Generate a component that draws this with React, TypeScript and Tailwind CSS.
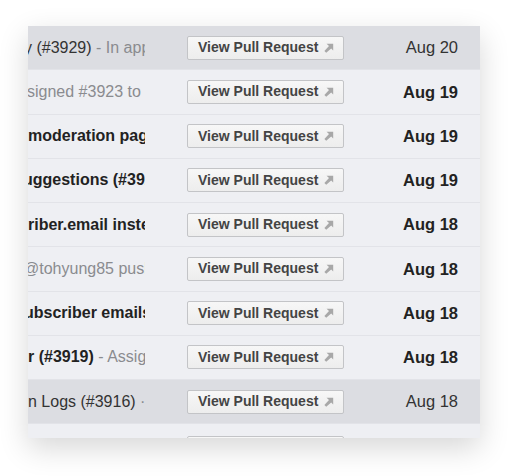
import type { FC } from 'react';

type Row = {
  id: number;
  shift: string;
  parts: { text: string; tone: 'bold' | 'dark' | 'muted' }[];
  date: string;
  read: boolean;
  dateBold: boolean;
};

const rows: Row[] = [
  { id: 1, shift: '-ml-[4px]', parts: [{ text: 'y (#3929)', tone: 'dark' }, { text: ' - In approval', tone: 'muted' }], date: 'Aug 20', read: true, dateBold: false },
  { id: 2, shift: '-ml-[1px]', parts: [{ text: 'signed #3923 to @tohyung85', tone: 'muted' }], date: 'Aug 19', read: false, dateBold: true },
  { id: 3, shift: 'ml-0', parts: [{ text: 'moderation page (#3925)', tone: 'bold' }], date: 'Aug 19', read: false, dateBold: true },
  { id: 4, shift: '-ml-[5px]', parts: [{ text: 'uggestions (#3924)', tone: 'bold' }], date: 'Aug 19', read: false, dateBold: true },
  { id: 5, shift: 'ml-0', parts: [{ text: 'riber.email instead', tone: 'bold' }], date: 'Aug 18', read: false, dateBold: true },
  { id: 6, shift: '-ml-[5px]', parts: [{ text: '@tohyung85 pushed', tone: 'muted' }], date: 'Aug 18', read: false, dateBold: true },
  { id: 7, shift: '-ml-[4px]', parts: [{ text: 'ubscriber emails', tone: 'bold' }], date: 'Aug 18', read: false, dateBold: true },
  { id: 8, shift: 'ml-0', parts: [{ text: 'r (#3919)', tone: 'bold' }, { text: ' - Assigned', tone: 'muted' }], date: 'Aug 18', read: false, dateBold: true },
  { id: 9, shift: 'ml-0', parts: [{ text: 'n Logs (#3916)', tone: 'dark' }, { text: ' · Merged', tone: 'muted' }], date: 'Aug 18', read: true, dateBold: false },
];

const toneClass = {
  bold: 'font-bold text-[#222]',
  dark: 'text-[#333]',
  muted: 'text-[#8a8b8f]',
};

const ArrowIcon: FC = () => (
  <svg width="10" height="10" viewBox="0 0 10 10" className="shrink-0">
    <path d="M2.6 0.8h6.6v6.6L7.2 5.4 2.2 9.8 0.4 8 5 3Z" fill="#a8a8a8" />
  </svg>
);

const PullButton: FC = () => (
  <div className="flex h-[24px] w-[157px] items-center gap-[6px] rounded-[2px] border border-[#c3c4c7] bg-gradient-to-b from-[#f7f7f7] to-[#ededed] pl-[10px] text-[14px] font-bold text-[#444]">
    <span>View Pull Request</span>
    <ArrowIcon />
  </div>
);

const App: FC = () => {
  return (
    <div className="min-h-[476px] w-[516px] bg-white pl-[28px] pt-[26px] font-['Liberation_Sans',Arial,sans-serif]">
      <div className="h-[412px] w-[452px] overflow-hidden bg-[#eeeff3] shadow-[0_10px_28px_rgba(0,0,0,0.16)]">
        {rows.map((r) => (
          <div
            key={r.id}
            className={`flex h-[44.25px] items-center border-b border-[#e2e3e8] ${r.read ? 'bg-[#dcdde2]' : 'bg-[#eeeff3]'}`}
          >
            <div className="w-[117px] shrink-0 overflow-hidden whitespace-nowrap text-[16px]">
              <div className={r.shift}>
                {r.parts.map((p, i) => (
                  <span key={i} className={toneClass[p.tone]}>
                    {p.text}
                  </span>
                ))}
              </div>
            </div>
            <div className="ml-[42px] shrink-0">
              <PullButton />
            </div>
            <div
              className={`flex-1 pr-[22px] text-right text-[16.5px] ${r.dateBold ? 'font-bold text-[#222]' : 'text-[#333]'}`}
            >
              {r.date}
            </div>
          </div>
        ))}
        <div className="flex h-[44px] items-start pt-[12px]">
          <div className="ml-[159px]">
            <PullButton />
          </div>
        </div>
      </div>
    </div>
  );
};

export default App;
